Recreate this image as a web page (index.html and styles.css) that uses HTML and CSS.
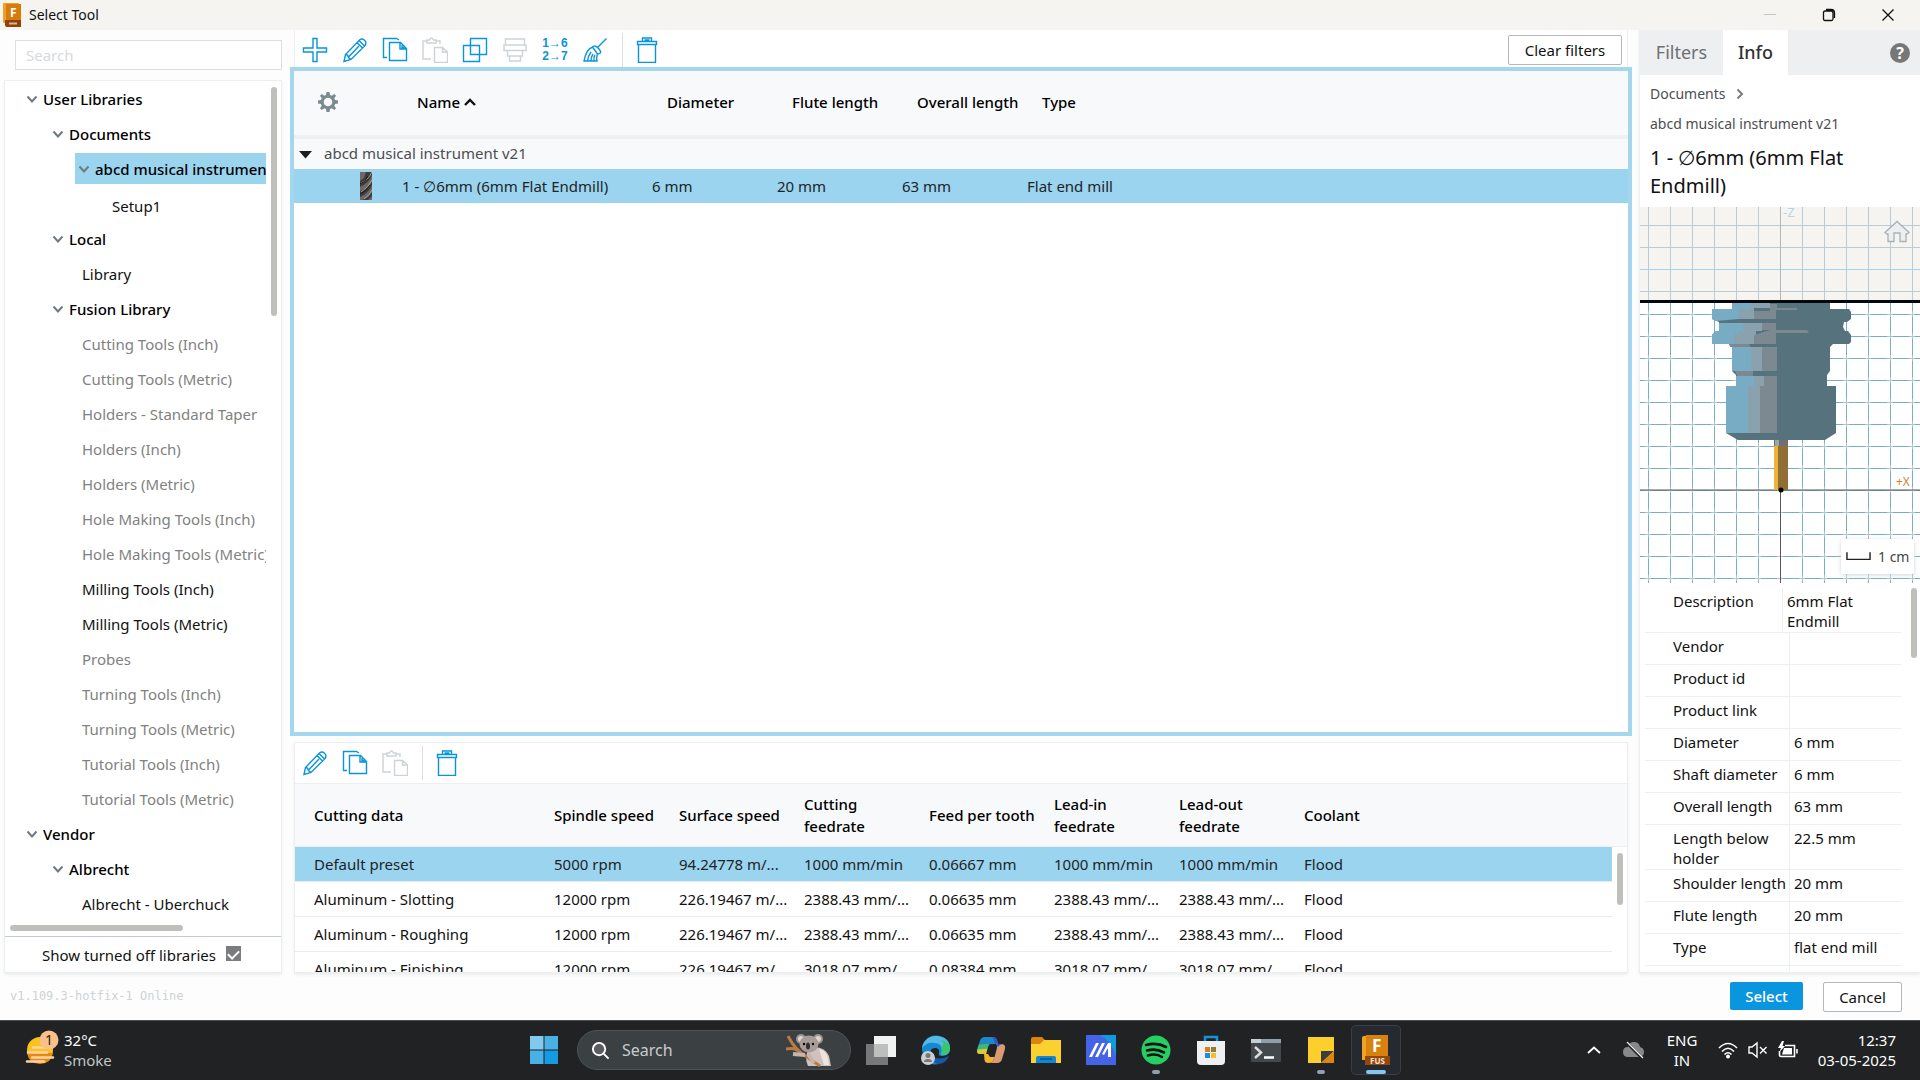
FILE: index.html
```html
<!DOCTYPE html>
<html lang="en">
<head>
<meta charset="utf-8">
<title>Select Tool</title>
<link rel="stylesheet" href="styles.css">
</head>
<body>
<svg class="sprite" aria-hidden="true">
  <symbol id="i-pencil" viewBox="0 0 26 26"><path d="M2 24.5 3.5 17.500 17.500 3Q20 1 22.500 3.200T23 8.500L9 22.500ZM15 5.500 20.500 11M17 3.500 22.500 9M3.500 17.500 5.500 18 6.500 20.500 9 22.500M6.500 20 17 9"/></symbol>
  <symbol id="i-copy" viewBox="0 0 26 26"><path d="M5 20.500H1.500V1.500H14.500L17 3M7.500 5.500H18.500L24.500 11.500V23.500H7.500ZM18 5.500V12H24.500M20 8V10.500H22.500"/></symbol>
  <symbol id="i-paste" viewBox="0 0 26 26"><path d="M9 22H1V4H5M14 4H18V7M5 3H7.500Q9.500-1 11.500 3H14V6H5ZM12.500 10.500H20.500L25.500 15V25.500H12.500ZM20.500 10.500V15H25.500"/></symbol>
  <symbol id="i-trash" viewBox="0 0 26 26"><path d="M4.500 7.500H21.500V25.500H4.500ZM3.500 4.500H22.500V7.500H3.500ZM8.500 4.500V1H17.500V4.500M10.500 3H15.500"/></symbol>
  <symbol id="i-down" viewBox="0 0 12 8"><path d="M1.500 1.500 6 6.500 10.500 1.500" fill="none" stroke="#6f7a80" stroke-width="2"/></symbol>
</svg>

<header class="titlebar">
  <svg class="app-icon" viewBox="0 0 18 24"><rect width="16" height="20" rx="1" fill="#f0a020"/><path d="M3 1H18V18H3Z" fill="#d67c0c"/><path d="M2 17H18V24H4Q2 24 2 22Z" fill="#8f4205"/><text x="7" y="14" font-size="12" font-weight="700" fill="#fff">F</text><path d="M6 20.500H14" stroke="#dcb591" stroke-width="2"/></svg>
  <h1>Select Tool</h1>
  <div class="window-controls">
    <button aria-label="Minimize" disabled><svg viewBox="0 0 14 14"><path d="M1 6.500H13" stroke="#c6c5c2"/></svg></button>
    <button aria-label="Restore"><svg viewBox="0 0 14 14"><path d="M1.500 4.500Q1.500 3 3 3H9Q11 3 11 5V11Q11 12.500 9.500 12.500H3Q1.500 12.500 1.500 11ZM4 1.500H9Q12.500 1.500 12.500 5V10" stroke="#111" stroke-width="1.300"/></svg></button>
    <button aria-label="Close"><svg viewBox="0 0 14 14"><path d="M1.500 1.500 12.500 12.500M12.500 1.500 1.500 12.500" stroke="#111" stroke-width="1.300"/></svg></button>
  </div>
</header>

<main class="workspace">
  <aside class="library">
    <input class="library-search" type="text" placeholder="Search" aria-label="Search">
    <div class="panel library-panel">
      <div class="tree-area">
        <ul class="tree">
          <li class="group"><svg><use href="#i-down"/></svg>User Libraries</li>
          <li class="group l2"><svg><use href="#i-down"/></svg>Documents</li>
          <li class="group l3 selected"><svg><use href="#i-down"/></svg>abcd musical instrument v21</li>
          <li class="setup">Setup1</li>
          <li class="group l2"><svg><use href="#i-down"/></svg>Local</li>
          <li class="leaf">Library</li>
          <li class="group l2"><svg><use href="#i-down"/></svg>Fusion Library</li>
          <li class="leaf off">Cutting Tools (Inch)</li>
          <li class="leaf off">Cutting Tools (Metric)</li>
          <li class="leaf off">Holders - Standard Taper</li>
          <li class="leaf off">Holders (Inch)</li>
          <li class="leaf off">Holders (Metric)</li>
          <li class="leaf off">Hole Making Tools (Inch)</li>
          <li class="leaf off">Hole Making Tools (Metric)</li>
          <li class="leaf">Milling Tools (Inch)</li>
          <li class="leaf">Milling Tools (Metric)</li>
          <li class="leaf off">Probes</li>
          <li class="leaf off">Turning Tools (Inch)</li>
          <li class="leaf off">Turning Tools (Metric)</li>
          <li class="leaf off">Tutorial Tools (Inch)</li>
          <li class="leaf off">Tutorial Tools (Metric)</li>
          <li class="group"><svg><use href="#i-down"/></svg>Vendor</li>
          <li class="group l2"><svg><use href="#i-down"/></svg>Albrecht</li>
          <li class="leaf">Albrecht - Uberchuck</li>
        </ul>
        <div class="tree-vbar"></div>
        <div class="tree-hbar"></div>
      </div>
      <div class="show-off">
        <label for="show-off">Show turned off libraries</label>
        <input id="show-off" type="checkbox" checked>
      </div>
    </div>
  </aside>

  <section class="center">
    <div class="toolbar top-toolbar">
      <button aria-label="New tool"><svg viewBox="0 0 26 26"><path d="M11 1.500H15V11H24.500V15H15V24.500H11V15H1.500V11H11Z"/></svg></button>
      <button aria-label="Edit"><svg><use href="#i-pencil"/></svg></button>
      <button aria-label="Copy"><svg><use href="#i-copy"/></svg></button>
      <button aria-label="Paste" disabled><svg><use href="#i-paste"/></svg></button>
      <button aria-label="Duplicate"><svg viewBox="0 0 26 26"><path d="M8.500 5.500V1.500H24.500V17.500H20.500M5.500 8.500H1.500V24.500H17.500V20.500M8.500 8.500H17.500V17.500H8.500ZM8.500 5.500V8.500M5.500 8.500H8.500M17.500 20.500V17.500H20.500"/></svg></button>
      <button aria-label="Merge" disabled><svg viewBox="0 0 26 26"><path d="M3.500 2H22.500V8H3.500ZM2 8H24V13.500H2ZM5.500 13.500H20.500V19H5.500ZM7.500 19H18.500V24H7.500Z"/></svg></button>
      <button class="renumber" aria-label="Renumber"><span>1→6</span><span>2→7</span></button>
      <button aria-label="Clean up"><svg viewBox="0 0 26 26"><path d="M24.500 1.500 15.500 10.500M10.500 10Q13 7.500 17 12T15.500 17ZM10.500 10Q4 12.500 2 24H15Q14 21 15.500 17M5.500 24Q6 19 9 15M9 24Q9 20 11 17M12 24Q11.500 20 13 18"/></svg></button>
      <span class="divider"></span>
      <button aria-label="Delete"><svg><use href="#i-trash"/></svg></button>
      <button class="outline-btn clear">Clear filters</button>
    </div>

    <div class="tools">
      <table class="tool-table">
        <colgroup><col class="c-icon"><col class="c-name"><col class="c-num"><col class="c-num"><col class="c-num"><col></colgroup>
        <thead>
          <tr>
            <th><svg class="gear" viewBox="0 0 20 20"><path d="M8.500 0h3l.5 3 1.800.8L16.300 2 18 3.800l-1.700 2.500.8 1.700 2.900.5v3l-2.900.5-.8 1.800 1.700 2.400-1.700 1.800-2.500-1.700-1.800.7-.5 3h-3L8 17l-1.800-.7L3.800 18 2 16.200l1.700-2.400L3 12l-3-.5v-3L3 8l.7-1.700L2 3.800 3.800 2l2.400 1.800L8 3Z" fill="#7b8990"/><circle cx="10" cy="10" r="4.300" fill="#f8f9fb"/></svg></th>
            <th>Name <svg class="sort" viewBox="0 0 12 8"><path d="M1 7 6 2 11 7" fill="none" stroke="#111" stroke-width="2.400"/></svg></th>
            <th>Diameter</th><th>Flute length</th><th>Overall length</th><th>Type</th>
          </tr>
        </thead>
        <tbody>
          <tr class="group-row"><td colspan="6"><svg class="caret" viewBox="0 0 14 8"><path d="M0 0H13L6.500 7.500Z" fill="#1e1e1e"/></svg>abcd musical instrument v21</td></tr>
          <tr class="selected-row">
            <td><svg class="endmill" viewBox="0 0 12 28"><path d="M0 0H12V28H0Z" fill="#3e3c3b"/><path d="M0 0H6L4 6 0 9ZM12 3Q9 11 0 15V19Q8 16 12 10ZM12 13Q9 21 0 25V28H2Q9 25 12 20ZM12 24 8 28H12Z" fill="#6d6865"/><path d="M12 0Q8 8 1 11M12 8Q9 15 1 20M12 18Q10 23 4 27" fill="none" stroke="#aaa29d"/><path d="M0 12 5 9 8 4M0 22 5 19 10 13" fill="none" stroke="#1d1c1c"/></svg></td>
            <td>1 - ∅6mm (6mm Flat Endmill)</td><td>6 mm</td><td>20 mm</td><td>63 mm</td><td>Flat end mill</td>
          </tr>
        </tbody>
      </table>
    </div>

    <div class="panel presets">
      <div class="toolbar">
        <button aria-label="Edit preset"><svg><use href="#i-pencil"/></svg></button>
        <button aria-label="Copy preset"><svg><use href="#i-copy"/></svg></button>
        <button aria-label="Paste preset" disabled><svg><use href="#i-paste"/></svg></button>
        <span class="divider"></span>
        <button aria-label="Delete preset"><svg><use href="#i-trash"/></svg></button>
      </div>
      <div class="preset-area">
        <table class="preset-table">
          <colgroup><col class="p-name"><col class="c-num"><col class="c-num"><col class="c-num"><col class="c-num"><col class="c-num"><col class="c-num"><col><col class="p-bar"></colgroup>
          <thead><tr><th>Cutting data</th><th>Spindle speed</th><th>Surface speed</th><th>Cutting<br>feedrate</th><th>Feed per tooth</th><th>Lead-in<br>feedrate</th><th>Lead-out<br>feedrate</th><th>Coolant</th><th></th></tr></thead>
          <tbody>
            <tr class="selected-row"><td>Default preset</td><td>5000 rpm</td><td>94.24778 m/...</td><td>1000 mm/min</td><td>0.06667 mm</td><td>1000 mm/min</td><td>1000 mm/min</td><td>Flood</td><td class="gutter" rowspan="4"><div class="preset-bar"></div></td></tr>
            <tr><td>Aluminum - Slotting</td><td>12000 rpm</td><td>226.19467 m/...</td><td>2388.43 mm/...</td><td>0.06635 mm</td><td>2388.43 mm/...</td><td>2388.43 mm/...</td><td>Flood</td></tr>
            <tr><td>Aluminum - Roughing</td><td>12000 rpm</td><td>226.19467 m/...</td><td>2388.43 mm/...</td><td>0.06635 mm</td><td>2388.43 mm/...</td><td>2388.43 mm/...</td><td>Flood</td></tr>
            <tr><td>Aluminum - Finishing</td><td>12000 rpm</td><td>226.19467 m/...</td><td>3018.07 mm/...</td><td>0.08384 mm</td><td>3018.07 mm/...</td><td>3018.07 mm/...</td><td>Flood</td></tr>
          </tbody>
        </table>
      </div>
    </div>
  </section>

  <aside class="panel info">
    <nav class="tabs">
      <button class="tab">Filters</button>
      <button class="tab active">Info</button>
      <button class="help" aria-label="Help">?</button>
    </nav>
    <div class="info-head">
      <p>Documents <svg viewBox="0 0 8 12"><path d="M1.500 1.500 6 6 1.500 10.500" fill="none" stroke="#7a7a7a" stroke-width="2"/></svg></p>
      <p>abcd musical instrument v21</p>
      <h2>1 - ∅6mm (6mm Flat Endmill)</h2>
    </div>
    <div class="viewer">
      <svg class="scene" viewBox="0 -1 280 376" preserveAspectRatio="xMidYMid slice">
        <defs>
          <pattern id="grid-far" x="8" y="17" width="22" height="22" patternUnits="userSpaceOnUse"><path d="M0 .5H22M.5 0V22" stroke="#bccbd3"/></pattern>
          <pattern id="grid" x="8" y="18" width="22" height="22" patternUnits="userSpaceOnUse"><path d="M0 .5H22M.5 0V22" stroke="#75aeca"/><path d="M19 .5H22M0 .5H3M.5 19V22M.5 0V3" stroke="#b3c4cd"/></pattern>
        </defs>
        <path d="M0-1H280V94H0Z" fill="#f5f4f1"/>
        <path d="M0-1H280V94H0Z" fill="url(#grid-far)"/>
        <path d="M0 61.500H280" stroke="#9bd5ef"/>
        <path d="M140.500-1V94" stroke="#b3b6b8"/>
        <path d="M0 95H280V376H0Z" fill="url(#grid)"/>
        <path d="M0 282H280M140.500 282V376" stroke="#55595c"/>
        <path d="M92 94H190V101H209L211 104V111L207 114H204L203 119 205 123H208L211 127V134L209 136H193L190 139V163L187 167V178H196V225L185 232H98L86 225V178H96V167L92 163V139L89 136H72V127L76 123H79V114L72 111V101H92Z" fill="#56727d"/>
        <path d="M92 94H111V101H99V111L76 113 72 111V101H92ZM79 115H103V123H100L94 136H72V127L76 123H79ZM92 139H111V163H92ZM96 168H114V178H108V225H86V178H96Z" fill="#78abc4"/>
        <path d="M111 94H130V100H114V111H99V101H111ZM103 115H122V123H116V136H94V127L100 123H103ZM111 139H122V163H111ZM114 168H124V178H120V225H108V178H114Z" fill="#8aa2ae"/>
        <path d="M130 96H137V100H157V102H136V111H114V103H130ZM122 115H136V122H167L169 125H136V136H114V127L130 122H122ZM89 136H109L111 139H90ZM122 139H137V163H122ZM95 163H113V168H97ZM124 168H137V225H120V178H124Z" fill="#7c8991"/>
        <path d="M134 232H148V239H134Z" fill="#706e6e"/><path d="M135 232H139V239H135Z" fill="#9aa5aa"/>
        <path d="M134 238H148V282H134Z" fill="#8f6f35"/><path d="M134 238H138V282H134Z" fill="#eeb236"/>
        <circle cx="141" cy="282" r="2.500"/>
        <path d="M0 92H280V95H0Z" fill="#05070a"/>
        <text x="143" y="9" font-size="13" fill="#b9d2df">-Z</text>
        <text x="256" y="278" font-size="12" fill="#cf8534">+X</text>
        <path d="M245 24.500 257 13.500 269 24.500 267 26H266V33.500H260V25H254V33.500H248V26H247Z" fill="#eceff1" stroke="#a7b2b7" stroke-width="1.300"/>
      </svg>
      <div class="scale"><svg viewBox="0 0 26 9"><path d="M1 0V7.500H25V0" fill="none" stroke="#222" stroke-width="1.500"/></svg>1 cm</div>
    </div>
    <div class="details">
      <dl class="detail-list">
        <div class="first"><dt>Description</dt><dd>6mm Flat Endmill</dd></div>
        <div><dt>Vendor</dt><dd></dd></div>
        <div><dt>Product id</dt><dd></dd></div>
        <div><dt>Product link</dt><dd></dd></div>
        <div><dt>Diameter</dt><dd>6 mm</dd></div>
        <div><dt>Shaft diameter</dt><dd>6 mm</dd></div>
        <div><dt>Overall length</dt><dd>63 mm</dd></div>
        <div><dt>Length below<br>holder</dt><dd>22.5 mm</dd></div>
        <div><dt>Shoulder length</dt><dd>20 mm</dd></div>
        <div><dt>Flute length</dt><dd>20 mm</dd></div>
        <div><dt>Type</dt><dd>flat end mill</dd></div>
        <div><dt></dt><dd></dd></div>
      </dl>
      <div class="detail-bar"></div>
    </div>
  </aside>
</main>

<footer class="dialog-footer">
  <span class="version">v1.109.3-hotfix-1 Online</span>
  <button class="primary-btn">Select</button>
  <button class="outline-btn cancel">Cancel</button>
</footer>

<div class="taskbar">
  <div class="weather">
    <svg viewBox="0 0 34 36"><circle cx="15" cy="20" r="13" fill="#fbc21d"/><path d="M2 23H28Q26 34 15 34T2 23Z" fill="#e58a10"/><path d="M8 17.500H27M3 22.500H22M7 27.500H28M2 31.500H19" stroke="#fbd3a0" stroke-width="2.600" stroke-linecap="round"/><circle cx="24" cy="10" r="9.500" fill="#f9c08a"/><text x="20" y="15" font-size="14" fill="#222">1</text></svg>
    <div><span>32°C</span><span class="dim">Smoke</span></div>
  </div>
  <div class="apps">
    <button class="app" aria-label="Start"><svg viewBox="0 0 30 30"><path d="M1 1H14.500V14.500H1Z" fill="#80c9ef"/><path d="M15.500 1H29V14.500H15.500ZM1 15.500H14.500V29H1Z" fill="#49b1e6"/><path d="M15.500 15.500H29V29H15.500Z" fill="#169ae1"/></svg></button>
    <label class="task-search">
      <svg class="lens" viewBox="0 0 20 20"><circle cx="8.500" cy="8.500" r="6.500" fill="#5a5d60" stroke="#fff" stroke-width="2"/><path d="M13.500 13.500 18.500 18.500" stroke="#fff" stroke-width="2"/></svg>
      <input type="text" placeholder="Search">
      <svg class="koala" viewBox="0 0 46 34"><path d="M23 15Q38 12 43 23L45 33H22Q18 25 23 15Z" fill="#d2c2bd"/><path d="M33 16Q42 17 43 32H38Z" fill="#eee4df"/><circle cx="15" cy="6" r="5" fill="#9d9291"/><circle cx="32" cy="6" r="5" fill="#9d9291"/><circle cx="15" cy="6" r="3" fill="#ded3d0"/><circle cx="32" cy="6" r="3" fill="#ded3d0"/><ellipse cx="23" cy="11" rx="9.500" ry="8.500" fill="#a89c9a"/><ellipse cx="22" cy="13" rx="2" ry="3.500" fill="#38302e"/><circle cx="18" cy="11" r="1.200"/><circle cx="27" cy="11" r="1.200"/><path d="M2 3Q9 17 21 24L34 33M0 16Q10 14 14 20" fill="none" stroke="#b87b43" stroke-width="3"/><path d="M7 21 19 22M22 21 28 30" stroke="#c5b3ae" stroke-width="4"/></svg>
    </label>
    <button class="app" aria-label="Task view"><svg viewBox="0 0 30 30"><path d="M8 1H30V22H8Z" fill="#f1f2f2"/><path d="M0 9H22V30H0Z" fill="#777879"/><path d="M8 9H22V22H8Z" fill="#bdbebe"/></svg></button>
    <button class="app" aria-label="Edge"><svg viewBox="0 0 30 30"><path d="M1 15A14 14 0 0 1 29 14Q29 21 21 21 17 21 18 18 19 14 15 13 9 12 9 20 10 26 18 29 4 32 1 15Z" fill="#1389cf"/><path d="M2 9Q7 0 16 1 29 2 29 14 28 21 20 20 23 8 13 8 6 7 1 13Z" fill="#54b9e8"/><path d="M20 5Q29 7 29 14 28 20 20 20 22 15 20 12 25 10 20 5Z" fill="#39c76b"/><path d="M11 21Q18 26 28 21 24 30 16 29 11 27 11 21Z" fill="#1659a8"/><circle cx="7" cy="23" r="7" fill="#cccfd1"/><circle cx="7" cy="20.500" r="2.500" fill="#777"/><path d="M3 27Q3 24 7 24T11 27Z" fill="#777"/></svg></button>
    <button class="app" aria-label="Copilot"><svg viewBox="0 0 30 30"><path d="M9 2H17Q20 2 21 5L22 9H15Q13 9 12 12L10 19H4Q0 19 1 14L4 6Q5 2 9 2Z" fill="#1e88c9"/><path d="M3 9.500 13 9 11.500 13.500 1.500 14.500Z" fill="#3dbc68"/><path d="M1.500 14.500 11.500 13.500 10 19H4Q0 19 1.500 14.500Z" fill="#d9c93a"/><path d="M8 19H12L14 22H19L17 26Q16 28 13 28H12Q9 28 8.500 25Z" fill="#f2b32c"/><path d="M20 9H25Q30 9 29 14L26 24Q25 28 21 28H14Q17 27 18 24L21 13Q21.500 10 20 9Z" fill="#d89b72"/><path d="M16 2Q20 1.500 21 5L22.500 9H27Q24 9 22 12L20 9Q18 8 18 5Z" fill="#3456c9"/></svg></button>
    <button class="app" aria-label="File Explorer"><svg viewBox="0 0 30 30"><path d="M0 4Q0 2 2 2H11L14 5H28V14H0Z" fill="#dd8410"/><path d="M0 9H9L13 5H30V28H0Z" fill="#fcd02f"/><path d="M5 28V23Q5 21 7 21H23Q25 21 25 23V28Z" fill="#1188d2"/><path d="M9 24H21" stroke="#0b5e9c" stroke-width="2"/></svg></button>
    <button class="app" aria-label="MyASUS"><svg viewBox="0 0 30 30"><path d="M0 0H30V30H0Z" fill="#4563e8"/><path d="M14 0H30V22Q26 6 14 0Z" fill="#0f9bdc"/><path d="M3 22 10 8H13L6 22ZM9 22 16 8H19L12 22ZM16 19 22 8H25V22H22V13L18 20Z" fill="#fff"/></svg></button>
    <button class="app running" aria-label="Spotify"><svg viewBox="0 0 30 30"><circle cx="15" cy="15" r="14.500" fill="#25cf62"/><path d="M5 10Q16 7 25 12M6 15.500Q15 13 23 17.500M7 20.500Q15 18 21 22" fill="none" stroke="#101312" stroke-width="2.600" stroke-linecap="round"/></svg></button>
    <button class="app" aria-label="Microsoft Store"><svg viewBox="0 0 30 30"><path d="M9 7V2H21V7" fill="none" stroke="#1593d8" stroke-width="2.500"/><path d="M1 6H29V26Q29 30 25 30H5Q1 30 1 26Z" fill="#eef0f1"/><path d="M9 12H14V17H9Z" fill="#e07b1c"/><path d="M15 12H20V17H15Z" fill="#8b7d3a"/><path d="M9 18H14V23H9Z" fill="#1491d8"/><path d="M15 18H20V23H15Z" fill="#f7bd22"/></svg></button>
    <button class="app" aria-label="Terminal"><svg viewBox="0 0 30 30"><rect y="4" width="30" height="23" rx="1" fill="#42484c"/><path d="M0 4H30V8H0Z" fill="#8ea0aa"/><path d="M0 4H10V8H0Z" fill="#c5ced2"/><path d="M4 12 10 17.500 4 23" fill="none" stroke="#ddd" stroke-width="2.500"/><path d="M13 22.500H23" stroke="#fff" stroke-width="2.500"/></svg></button>
    <button class="app running" aria-label="Sticky Notes"><svg viewBox="0 0 30 30"><path d="M2 2H28V28H2Z" fill="#fccf2d"/><path d="M15 28V16H28Z" fill="#3c3c3d"/><path d="M15 28 28 16V28Z" fill="#dc850f"/></svg></button>
    <button class="app current" aria-label="Fusion"><svg viewBox="0 0 30 30"><path d="M1 3Q1 1 3 1H23V25H1Z" fill="#f0a423"/><path d="M5 0H27V22H5Z" fill="#d9810e"/><path d="M4 21H29V30H4Z" fill="#93470a"/><text x="11" y="17" font-size="17" font-weight="700" fill="#fff">F</text><text x="9" y="29" font-size="8" font-weight="700" fill="#f5e4d2">FUS</text></svg></button>
  </div>
  <div class="tray">
    <svg class="t-up" viewBox="0 0 14 8"><path d="M1 7 7 1.500 13 7" fill="none" stroke="#fff" stroke-width="1.800"/></svg>
    <svg class="t-cloud" viewBox="0 0 22 18"><path d="M5 16Q0 16 0 11T5 6Q6 1 11 1T17 6Q21 7 21 11T17 16Z" fill="#88898a"/><path d="M3 1 19 17" stroke="#202224" stroke-width="3"/><path d="M4 1 20 17" stroke="#eee" stroke-width="1.300"/></svg>
    <div class="lang"><span>ENG</span><span>IN</span></div>
    <svg class="t-icon" viewBox="0 0 20 18"><path d="M1 7Q10-2 19 7M4 10.500Q10 4 16 10.500M6.500 13.500Q10 10 13.500 13.500" fill="none" stroke="#fff" stroke-width="1.600"/><circle cx="10" cy="15.500" r="2" fill="#fff"/></svg>
    <svg class="t-icon t-sound" viewBox="0 0 20 18"><path d="M1 6H4L9 2V16L4 12H1ZM12 6 18.500 12.500M18.500 6 12 12.500" fill="none" stroke="#fff" stroke-width="1.400"/></svg>
    <svg class="t-icon" viewBox="0 0 20 18"><path d="M7 4.500H16.500V15.500H3Q1.500 15.500 1.500 14V10M19 8V12.500" fill="none" stroke="#fff" stroke-width="1.600"/><path d="M6 7H14V13.500H4ZM4 0 0 7H3L1.500 11 7 5H4.500L6 0Z" fill="#fff"/></svg>
    <div class="clock"><span>12:37</span><span>03-05-2025</span></div>
  </div>
</div>
</body>
</html>
```
FILE: styles.css
```css
* { box-sizing: border-box; }
html, body { height: 100%; }
body {
  margin: 0;
  display: flex;
  flex-direction: column;
  overflow: hidden;
  background: #fdfdfd;
  color: #111;
  font: 15px/20px "Noto Sans", "Open Sans", sans-serif;
}
button, input { font: inherit; color: inherit; }
button { padding: 0; border: 0; background: none; }
h1, h2, p, ul, dl, dd { margin: 0; padding: 0; }
svg { display: block; flex: none; }
.sprite { display: none; }

/* Title bar */
.titlebar { display: flex; align-items: center; height: 30px; padding-left: 3px; background: #f5f4f1; }
.app-icon { width: 18px; height: 24px; }
.titlebar h1 { margin-left: 8px; font-size: 14px; font-weight: 400; }
.window-controls { display: flex; margin-left: auto; padding-right: 3px; }
.window-controls button { display: grid; place-items: center; width: 59px; height: 30px; }
.window-controls svg { width: 14px; height: 14px; fill: none; }

/* Workspace */
.workspace { flex: 1; min-height: 0; display: grid; grid-template-columns: 282px minmax(0, 1fr) 281px; }
.panel { background: #fff; border: 1px solid #eceef0; box-shadow: 0 2px 3px #eceef0; }

/* Library tree */
.library { display: flex; flex-direction: column; gap: 10px; min-height: 0; padding: 10px 0 0 4px; }
.library-search { height: 30px; margin-left: 11px; padding: 0 10px; border: 1px solid #dadfe2; background: #fff; outline: 0; }
.library-search::placeholder { color: #d6dadc; opacity: 1; }
.library-panel { flex: 1; min-height: 0; display: flex; flex-direction: column; }
.tree-area { position: relative; flex: 1; min-height: 0; overflow: hidden; }
.tree { width: 261px; overflow: hidden; list-style: none; }
.tree li { display: flex; align-items: center; height: 35px; padding-left: 21px; white-space: nowrap; }
.tree svg { width: 12px; height: 8px; margin-right: 5px; }
.tree .group { font-weight: 500; color: #000; }
.tree .l2 { padding-left: 47px; }
.tree .l3 { height: 31px; margin: 2px 0 2px 70px; padding-left: 3px; overflow: hidden; background: #9bd4ef; }
.tree .leaf { padding-left: 77px; }
.tree .setup { padding: 5px 0 0 107px; }
.tree .off { color: #7f8280; }
.tree-vbar, .tree-hbar { position: absolute; border-radius: 3px; background: #bfbfbc; }
.tree-vbar { top: 6px; right: 4px; width: 6px; height: 229px; }
.tree-hbar { bottom: 5px; left: 5px; width: 173px; height: 6px; }
.show-off { display: flex; align-items: center; gap: 10px; height: 36px; padding-left: 37px; border-top: 1px solid #c3cbd0; }
.show-off input {
  appearance: none;
  width: 15px;
  height: 15px;
  margin: 0 0 3px;
  background: #7b7c7d;
  display: grid;
  place-items: center;
}
.show-off input:checked::before {
  content: "";
  width: 9px;
  height: 5px;
  border: solid #fff;
  border-width: 0 0 2px 2px;
  transform: rotate(-45deg);
}

/* Toolbars */
.center { display: flex; flex-direction: column; min-width: 0; min-height: 0; padding: 0 7px 0 8px; }
.toolbar { display: flex; align-items: center; gap: 14px; padding-left: 7px; background: #fff; }
.toolbar button { flex: none; }
.toolbar svg { width: 26px; height: 26px; fill: none; stroke: #0a94da; stroke-width: 1.4; }
.toolbar button:disabled svg { stroke: #cdd3d7; }
.top-toolbar { height: 37px; margin: 0 4px; padding: 3px 5px 0 7px; border: solid #eceef0; border-width: 0 1px; }
.divider { align-self: stretch; width: 1px; margin-right: -3px; background: #dcdfe1; }
.toolbar .renumber { width: 26px; color: #0a94da; line-height: 13px; text-align: center; }
.renumber span { display: block; font-family: "Liberation Sans", sans-serif; font-size: 12px; font-weight: 700; white-space: nowrap; }
.outline-btn { height: 30px; border: 1px solid #b5b8ba; border-radius: 2px; background: #fff; }
.toolbar .clear { width: 114px; margin-left: auto; }

/* Tool list */
.tools { flex: 1; min-height: 0; border: 4px solid #a4d7ee; background: #fff; }
table { width: 100%; border-collapse: collapse; table-layout: fixed; }
th, td { padding: 0 0 0 15px; text-align: left; white-space: nowrap; }
th { font-weight: 500; color: #000; background: #f8f9fb; }
.c-icon { width: 93px; }
.c-name { width: 250px; }
.c-num { width: 125px; }
.tool-table th { height: 66px; padding: 0 0 2px 30px; border-bottom: 4px solid #eef0f2; }
.tool-table th:first-child { padding-left: 24px; }
.gear { width: 20px; height: 20px; }
.sort { display: inline-block; width: 12px; height: 8px; vertical-align: 2px; }
.group-row td { height: 32px; padding: 0 0 3px 5px; background: #f8f9fb; color: #4b4e50; }
.caret { display: inline-block; width: 14px; height: 8px; margin-right: 11px; }
.tool-table .selected-row td { height: 34px; }
.tool-table .selected-row td:first-child { padding-left: 66px; }
.selected-row { background: #9bd4ef; color: #1d2427; }
.endmill { width: 12px; height: 28px; }

/* Cutting presets */
.presets { height: 231px; margin: 6px 4px 0; overflow: hidden; }
.presets .toolbar { height: 40px; padding: 3px 7px; }
.p-name { width: 245px; }
.p-bar { width: 15px; }
.preset-table th { height: 63px; padding-left: 14px; border: solid #eceef0; border-width: 1px 0; line-height: 22px; }
.preset-table td { height: 35px; padding-left: 14px; border-bottom: 1px solid #e9ebec; }
.preset-table th:first-child, .preset-table td:first-child { padding-left: 19px; }
.preset-table .gutter { padding: 6px 0 0; vertical-align: top; background: #fff; }
.preset-bar { width: 6px; height: 52px; margin-left: 5px; border-radius: 3px; background: #bfbfbc; }

/* Info panel */
.info { display: flex; flex-direction: column; min-height: 0; border-top: 0; border-right: 0; overflow: hidden; }
.tabs { display: flex; height: 45px; background: #eeeff1; }
.tab { width: 83px; padding-bottom: 2px; font-size: 18px; color: #6b7174; }
.tab.active { width: 65px; background: #fff; color: #333; font-weight: 500; }
.help { align-self: center; width: 20px; height: 20px; margin: 0 10px 0 auto; border-radius: 50%; background: #777; color: #fff; font-weight: 700; font-size: 16px; }
.info-head { padding: 4px 10px 7px; }
.info-head p { display: flex; align-items: center; gap: 11px; height: 30px; font-size: 14px; color: #4b4e50; }
.info-head svg { width: 8px; height: 12px; }
.info-head h2 { padding-top: 5px; font-size: 20px; font-weight: 400; line-height: 28px; }
.viewer { position: relative; height: 376px; }
.scene { width: 100%; height: 100%; }
.scale { position: absolute; right: 6px; bottom: 9px; display: flex; align-items: center; gap: 7px; width: 73px; height: 35px; padding-left: 5px; background: #fff; border-radius: 2px; box-shadow: 0 1px 4px #cfd6da; color: #444; font-size: 14px; white-space: nowrap; }
.scale svg { width: 25px; height: 9px; }
.details { flex: 1; min-height: 0; display: flex; justify-content: space-between; padding: 5px 3px 0 5px; overflow: hidden; }
.detail-list { width: 256px; }
.detail-list div { display: flex; min-height: 32px; border-bottom: 1px solid #eceef0; }
.detail-list dt { flex: none; width: 144px; padding: 3px 0 1px 28px; white-space: nowrap; }
.detail-list dd { flex: 1; padding: 3px 0 1px 4px; border-left: 1px solid #eceef0; }
.detail-list .first dt { width: 137px; }
.detail-list .first dd { padding-right: 40px; }
.detail-bar { width: 6px; height: 70px; border-radius: 3px; background: #bfbfbc; }

/* Dialog footer */
.dialog-footer { display: flex; align-items: flex-start; gap: 20px; height: 47px; padding: 9px 18px 0 10px; }
.version { margin: 4px auto 0 0; font-family: "DejaVu Sans Mono", monospace; font-size: 12px; color: #cdd3d6; }
.primary-btn { width: 73px; height: 28px; border-radius: 2px; background: #0a96df; color: #fff; font-weight: 500; }
.cancel { width: 79px; }

/* Taskbar */
.taskbar { display: grid; grid-template-columns: 1fr auto 1fr; align-items: center; height: 60px; padding-bottom: 1px; background: #202224; color: #fff; border-top: 1px solid #4b4f52; }
.taskbar span { display: block; }
.weather { display: flex; gap: 5px; padding-left: 25px; }
.weather svg { width: 34px; height: 36px; }
.dim { color: #c3c5c6; }
.apps { display: flex; align-items: center; gap: 5px; }
.app { position: relative; display: grid; place-items: center; width: 50px; height: 50px; border-radius: 5px; }
.app svg { width: 30px; height: 30px; }
.task-search { display: flex; align-items: center; gap: 12px; width: 274px; height: 40px; margin-left: 3px; padding: 0 18px 0 13px; border-radius: 20px; background: #3b4043; border: 1px solid #4e5356; }
.task-search input { flex: 1; min-width: 0; padding: 0; border: 0; background: none; outline: 0; font-size: 16px; }
.task-search input::placeholder { color: #c9cccd; opacity: 1; }
.lens { width: 19px; height: 19px; }
.koala { width: 46px; height: 34px; }
.running::after, .current::after { content: ""; position: absolute; left: 21px; bottom: 1px; width: 8px; height: 4px; border-radius: 2px; background: #8da0ad; }
.current { background: #242932; box-shadow: inset 0 0 0 1px #3a3f47; }
.current::after { left: 15px; width: 20px; background: #88c5ea; }
.tray { display: flex; align-items: center; justify-content: flex-end; padding-right: 24px; }
.t-up { width: 14px; height: 8px; }
.t-cloud { width: 22px; height: 18px; margin-left: 22px; }
.lang { width: 34px; margin: 0 19px 0 20px; text-align: center; }
.t-icon { width: 20px; height: 18px; }
.t-sound { margin: 0 10px; }
.clock { width: 98px; text-align: right; }
```
